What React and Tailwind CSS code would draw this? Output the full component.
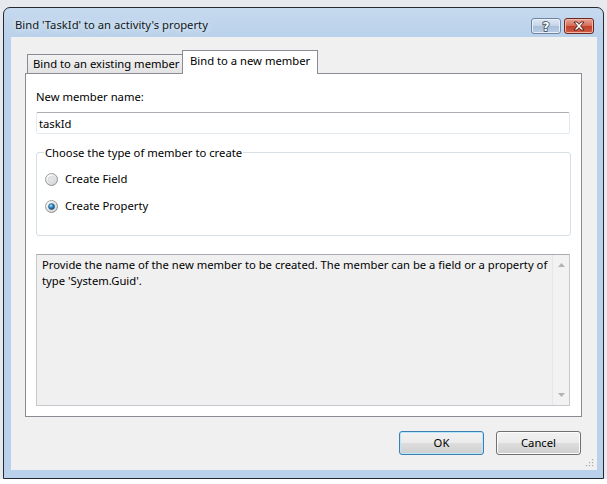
import React, { useState } from "react";

// Windows 7 style radio button
const Radio = ({ checked }) => (
  <svg width="13" height="13" viewBox="0 0 13 13">
    <defs>
      <linearGradient id="rg-ring" x1="0" y1="0" x2="1" y2="1">
        <stop offset="0" stopColor="#a7a7a7" />
        <stop offset="1" stopColor="#8b8b8b" />
      </linearGradient>
      <radialGradient id="rg-face" cx="0.35" cy="0.3" r="0.8">
        <stop offset="0" stopColor="#ffffff" />
        <stop offset="1" stopColor="#cfd0d2" />
      </radialGradient>
      <radialGradient id="rg-dot" cx="0.4" cy="0.35" r="0.7">
        <stop offset="0" stopColor="#c5e6f7" />
        <stop offset="0.45" stopColor="#2f8fca" />
        <stop offset="1" stopColor="#0d3f6b" />
      </radialGradient>
    </defs>
    <circle cx="6.5" cy="6.5" r="6" fill="url(#rg-face)" stroke="url(#rg-ring)" strokeWidth="1" />
    {checked ? (
      <circle cx="6.5" cy="6.5" r="3" fill="url(#rg-dot)" stroke="#1c4f7c" strokeWidth="0.6" />
    ) : (
      <circle cx="6.5" cy="6.5" r="3.3" fill="#e2e3e5" stroke="#d0d1d3" strokeWidth="0.5" />
    )}
  </svg>
);

const Tab = ({ active, children }) => (
  <div
    className={
      active
        ? "relative z-10 -mb-px h-[24px] w-[136px] border border-b-0 border-[#898c95] bg-white pl-[7px] pt-[2px] leading-[16px]"
        : "h-[19px] w-[155px] border-l border-t border-[#898c95] bg-[linear-gradient(#f2f2f2,#e3e3e3)] pl-[5px] pt-[1px] leading-[16px]"
    }
  >
    {children}
  </div>
);

const WinButton = ({ def, children }) => (
  <button
    className={
      "h-[24px] w-[85px] rounded-[3px] border leading-[20px] " +
      (def
        ? "border-[#3c7fb1] shadow-[inset_0_0_0_1px_#b8e6fb]"
        : "border-[#707070] shadow-[inset_0_0_0_1px_#fcfcfc]") +
      " bg-[linear-gradient(#f2f2f2_0%,#ebebeb_48%,#dddddd_52%,#cfcfcf_100%)]"
    }
  >
    {children}
  </button>
);

export default function App() {
  const [kind, setKind] = useState("property");
  const [name, setName] = useState("taskId");

  return (
    <div className="relative h-[484px] w-[607px] overflow-hidden bg-[#e6e9ee] font-['Noto_Sans',sans-serif] text-[11.25px] text-black">
      <div className="h-[7px]" />
      {/* window */}
      <div className="ml-[3px] flex h-[472px] w-[601px] flex-col rounded-t-[7px] border border-[#262a30] bg-[linear-gradient(#c6d9ef,#b9d1ea_30px,#b9d1ea)]">
        {/* title bar */}
        <div className="flex h-[29px] items-start">
          <div className="pl-[11px] pt-[9px] leading-[16px] text-[#101820] [text-shadow:0_0_6px_#ffffff]">
            Bind 'TaskId' to an activity's property
          </div>
          <div className="ml-auto mr-[9px] mt-[10px] flex gap-[3px]">
            <div className="flex h-[16px] w-[30px] items-center justify-center rounded-[3px] border border-[#6f84a0] bg-[linear-gradient(#dfe8f3,#c3d4e8_50%,#a9bfdb_51%,#b8cce4)] shadow-[inset_0_0_0_1px_#e8eff8]">
              <svg width="12" height="13" viewBox="0 0 12 13">
                <text
                  x="6"
                  y="11"
                  textAnchor="middle"
                  fontFamily="DejaVu Sans, sans-serif"
                  fontWeight="bold"
                  fontSize="12"
                  fill="#ffffff"
                  stroke="#3b4657"
                  strokeWidth="1.6"
                  paintOrder="stroke"
                >
                  ?
                </text>
              </svg>
            </div>
            <div className="flex h-[16px] w-[30px] items-center justify-center rounded-[3px] border border-[#6b2a20] bg-[linear-gradient(#e8a597,#d46a57_50%,#c0402b_51%,#cf5c46)] shadow-[inset_0_0_0_1px_#f0b7aa]">
              <svg width="14" height="10" viewBox="0 0 14 10">
                <path
                  d="M2 1 L5 1 L7 3.3 L9 1 L12 1 L8.6 5 L12 9 L9 9 L7 6.7 L5 9 L2 9 L5.4 5 Z"
                  fill="#ffffff"
                  stroke="#4a1c14"
                  strokeWidth="0.9"
                  strokeLinejoin="round"
                />
              </svg>
            </div>
          </div>
        </div>

        {/* client area */}
        <div className="relative ml-[7px] mr-[6px] h-[433px] bg-[#f0f0f0] pl-[14px] pr-[15px] pt-[13px]">
          {/* tab strip */}
          <div className="flex h-[23px] items-end pl-[2px]">
            <Tab>Bind to an existing member</Tab>
            <Tab active>Bind to a new member</Tab>
          </div>

          {/* tab panel */}
          <div className="h-[344px] border border-[#898c95] bg-white px-[10px]">
            <div className="mt-[15px] h-[15px] leading-[15px]">New member name:</div>
            <input
              value={name}
              onChange={(e) => setName(e.target.value)}
              className="mt-[8px] block h-[22px] w-[534px] rounded-[2px] border border-[#e3e9ef] border-t-[#abadb3] bg-white px-[2px] text-[11.25px] leading-[18px] outline-none"
            />

            {/* group box */}
            <div className="mt-[18px] h-[84px] rounded-[3px] border border-[#d5dfe5]">
              <div className="-mt-[8px] ml-[7px] block h-[15px] w-fit bg-white px-[1px] leading-[15px]">
                Choose the type of member to create
              </div>
              <label
                className="mt-[11px] flex h-[16px] items-center gap-[7px] pl-[8px]"
                onClick={() => setKind("field")}
              >
                <Radio checked={kind === "field"} />
                <span>Create Field</span>
              </label>
              <label
                className="mt-[11px] flex h-[16px] items-center gap-[7px] pl-[8px]"
                onClick={() => setKind("property")}
              >
                <Radio checked={kind === "property"} />
                <span>Create Property</span>
              </label>
            </div>

            {/* description */}
            <div className="mt-[18px] flex h-[152px] w-[534px] border border-[#c5c8cd] border-t-[#a9abb0] bg-[#f0f0f0]">
              <div className="flex-1 pl-[5px] pt-[2px] leading-[16px]">
                <div className="whitespace-nowrap">
                  Provide the name of the new member to be created. The member can be a field or a property of
                </div>
                <div>type 'System.Guid'.</div>
              </div>
              <div className="flex w-[17px] flex-col items-center justify-between border-l border-[#e6e6e6] bg-[#f2f2f2] py-[8px]">
                <svg width="7" height="4" viewBox="0 0 7 4">
                  <path d="M0 4 L3.5 0 L7 4 Z" fill="#b3b3b3" />
                </svg>
                <svg width="7" height="4" viewBox="0 0 7 4">
                  <path d="M0 0 L3.5 4 L7 0 Z" fill="#b3b3b3" />
                </svg>
              </div>
            </div>
          </div>

          {/* buttons */}
          <div className="mt-[14px] flex justify-end gap-[12px] pr-[1px]">
            <WinButton def>OK</WinButton>
            <WinButton>Cancel</WinButton>
          </div>

          {/* size grip */}
          <svg className="absolute bottom-[3px] right-[3px]" width="9" height="9" viewBox="0 0 9 9">
            {[
              [7, 1],
              [7, 4],
              [4, 4],
              [7, 7],
              [4, 7],
              [1, 7],
            ].map(([x, y]) => (
              <rect key={x + "-" + y} x={x} y={y} width="1.2" height="1.2" fill="#a8a8a8" />
            ))}
          </svg>
        </div>
      </div>
      <div className="h-[5px] bg-white" />
    </div>
  );
}
